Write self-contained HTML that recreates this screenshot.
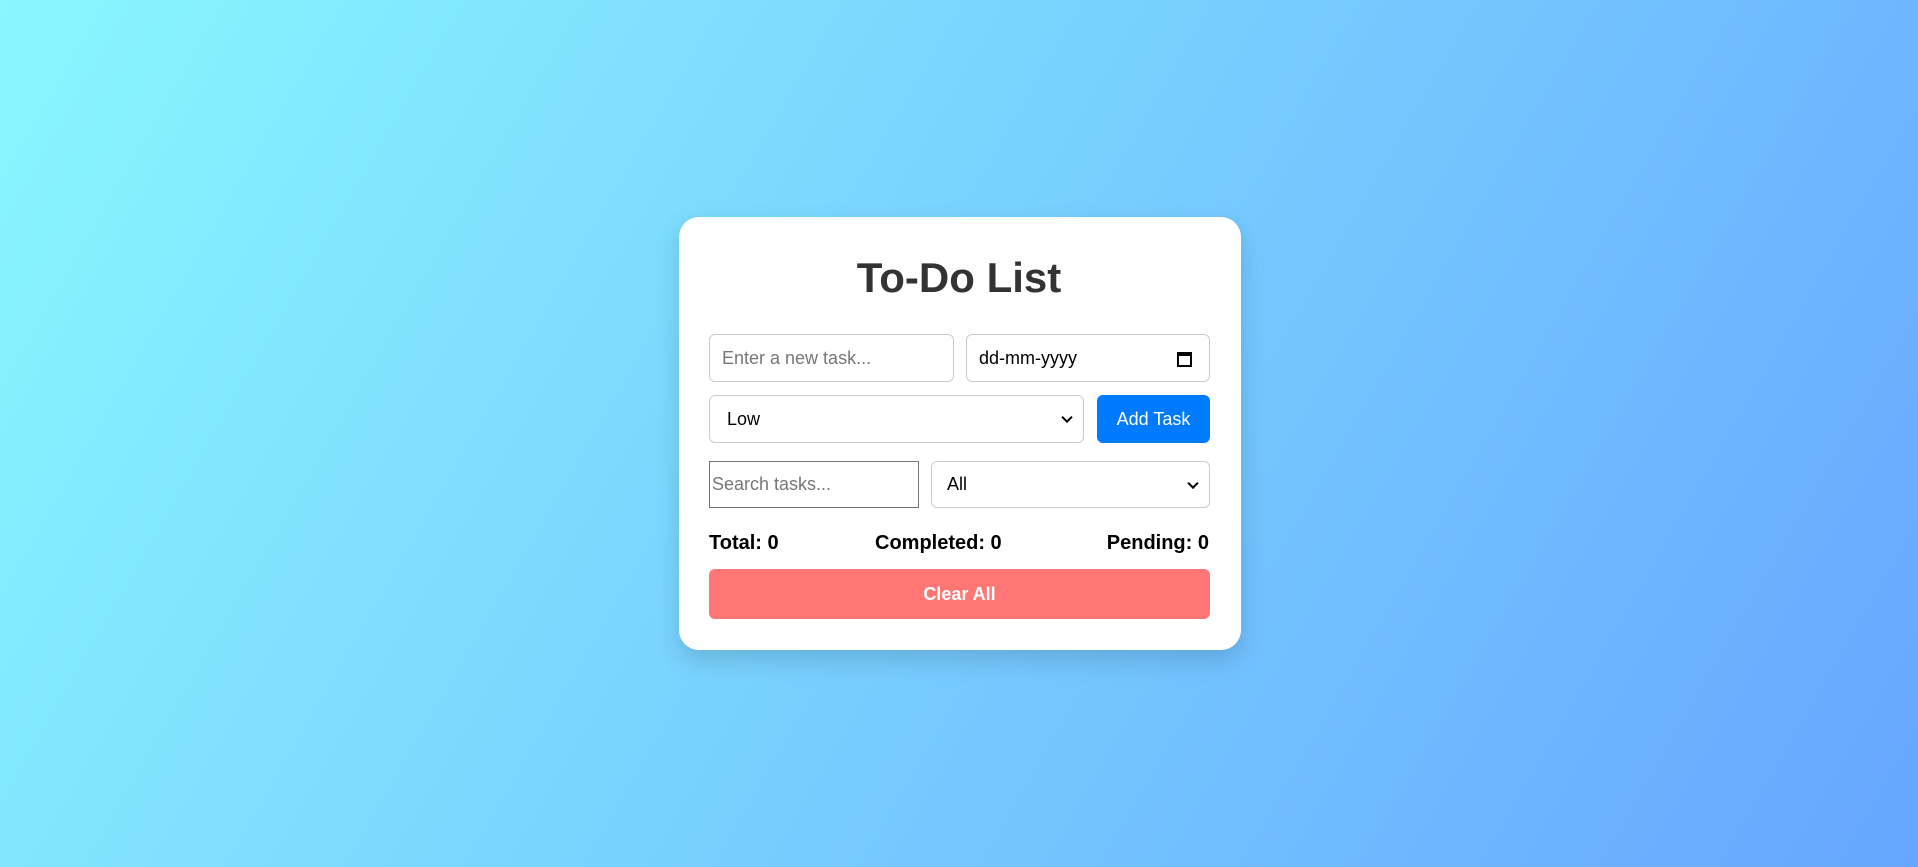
<!DOCTYPE html>
<html><head><meta charset="utf-8"><style>
*{box-sizing:border-box;margin:0;padding:0}
html,body{width:1918px;height:867px;overflow:hidden}
body{background:linear-gradient(120deg,#89f7fe 0%,#66a6ff 100%);font-family:"Liberation Sans",sans-serif;position:relative}
.card{position:absolute;left:679px;top:217px;width:562px;height:433px;background:#fff;border-radius:20px;box-shadow:0 10px 25px rgba(0,0,0,.15)}
h1{position:absolute;left:0;right:0;top:252px;text-align:center;font-size:42px;font-weight:bold;color:#333;line-height:52px}
.b{position:absolute;border:1px solid #ccc;border-radius:6px;background:#fff;font-size:18px;display:flex;align-items:center;padding-left:12px;color:#000}
.ph{color:#777}
.chev{position:absolute;right:12px;top:50%;width:8px;height:8px;border-right:2px solid #000;border-bottom:2px solid #000;transform:translateY(-70%) rotate(45deg)}
.stat{position:absolute;top:532px;font-size:20px;font-weight:bold;color:#000}
</style></head><body>
<div class="card"></div>
<h1>To-Do List</h1>
<div class="b ph" style="left:709px;top:334px;width:245px;height:48px">Enter a new task...</div>
<div class="b" style="left:966px;top:334px;width:244px;height:48px">dd-mm-yyyy
<svg style="position:absolute;right:17px;top:16px" width="15" height="16" viewBox="0 0 15 16"><rect x="1" y="2" width="13" height="13" fill="none" stroke="#000" stroke-width="2"/><rect x="1" y="2" width="13" height="3" fill="#000"/></svg></div>
<div class="b" style="left:709px;top:395px;width:375px;height:48px;padding-left:17px">Low<span class="chev"></span></div>
<div class="b" style="left:1097px;top:395px;width:113px;height:48px;background:#007bff;border-color:#007bff;color:#fff;justify-content:center;padding:0">Add Task</div>
<div class="b ph" style="left:709px;top:461px;width:210px;height:47px;border-color:#767676;border-radius:0;padding-left:2px">Search tasks...</div>
<div class="b" style="left:931px;top:461px;width:279px;height:47px;padding-left:15px">All<span class="chev"></span></div>
<div class="stat" style="left:709px">Total: 0</div>
<div class="stat" style="left:875px">Completed: 0</div>
<div class="stat" style="right:709px">Pending: 0</div>
<div class="b" style="left:709px;top:569px;width:501px;height:50px;background:#ff7675;border:none;color:#fff;font-weight:bold;justify-content:center;padding:0">Clear All</div>
</body></html>
